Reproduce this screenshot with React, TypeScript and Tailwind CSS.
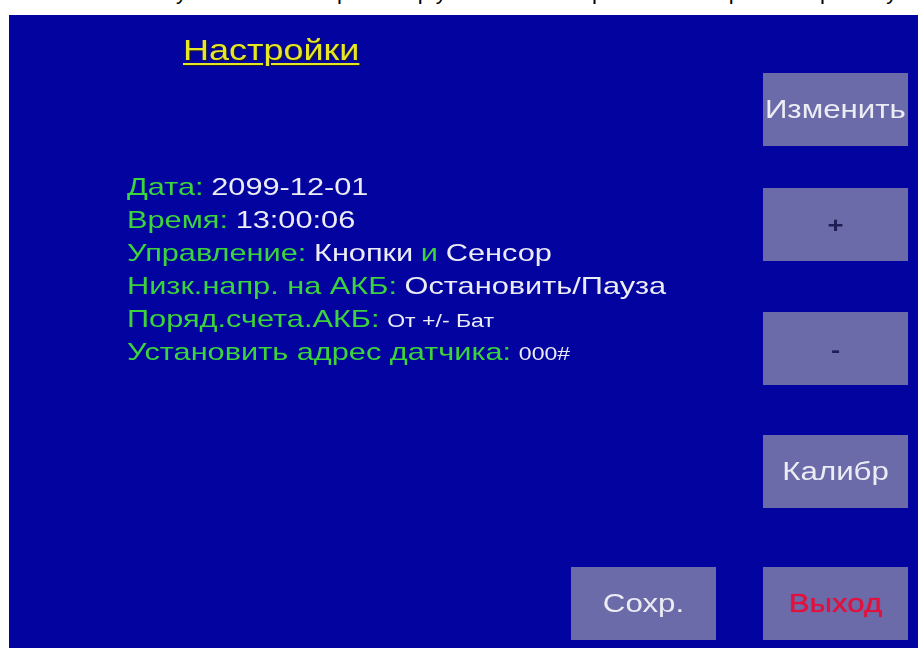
import React from "react"

const font = { fontFamily: '"Liberation Sans", Arial, sans-serif' }

type Row = { label: string; parts: { text: string; green?: boolean; small?: boolean }[] }

const rows: Row[] = [
  { label: "Дата:", parts: [{ text: "2099-12-01" }] },
  { label: "Время:", parts: [{ text: "13:00:06" }] },
  {
    label: "Управление:",
    parts: [{ text: "Кнопки" }, { text: "и", green: true }, { text: "Сенсор" }],
  },
  { label: "Низк.напр. на АКБ:", parts: [{ text: "Остановить/Пауза" }] },
  { label: "Поряд.счета.АКБ:", parts: [{ text: "От +/- Бат", small: true }] },
  { label: "Установить адрес датчика:", parts: [{ text: "000#", small: true }] },
]

const PanelButton = ({ children, className = "" }: { children: React.ReactNode; className?: string }) => (
  <div className={`flex h-[73px] w-[145px] items-center justify-center bg-[#6b6baa] ${className}`}>
    <span className="inline-block origin-center scale-x-[1.25] text-[25px] leading-none">{children}</span>
  </div>
)

export default function App() {
  return (
    <div className="flex h-[648px] w-[918px] flex-col bg-white" style={font}>
      {/* tail of the caption line above the panel */}
      <div className="h-[15px] overflow-hidden">
        <div className="ml-[120px] -mt-[19px] whitespace-nowrap text-[22px] leading-[22px] tracking-[6px] text-black">
          Рисунок 4. Экран группы настройки параметров устройства, пример
        </div>
      </div>

      <div className="ml-[9px] flex flex-1 bg-[#0303a0]">
        <div className="flex flex-1 flex-col">
          <div className="ml-[174px] mt-[21px] h-[28px]">
            <span className="inline-block origin-left scale-x-[1.24] text-[29px] leading-[28px] text-[#e6e627] underline decoration-2 underline-offset-[3px] [text-shadow:1px_1px_1px_#202020]">
              Настройки
            </span>
          </div>

          <div className="ml-[118px] mt-[106px] flex flex-col">
            {rows.map((row) => (
              <div key={row.label} className="h-[33px] origin-left scale-x-[1.28] whitespace-nowrap text-[24px] leading-[33px]">
                <span className="text-[#3cd43c]">{row.label}</span>
                {row.parts.map((p, i) => (
                  <span
                    key={i}
                    className={`ml-[6px] ${p.green ? "text-[#3cd43c]" : "text-[#ececf4]"} ${p.small ? "text-[18px]" : ""}`}
                  >
                    {p.text}
                  </span>
                ))}
              </div>
            ))}
          </div>

          <div className="mb-[8px] mr-[47px] mt-auto flex justify-end">
            <PanelButton className="text-[#ececf4]">Сохр.</PanelButton>
          </div>
        </div>

        <div className="mr-[10px] flex w-[145px] flex-col">
          <PanelButton className="mt-[58px] text-[#ececf4]">Изменить</PanelButton>
          <PanelButton className="mt-[42px] text-[#1e1e55]">
            <span className="text-[22px] font-bold">+</span>
          </PanelButton>
          <PanelButton className="mt-[51px] text-[#1e1e55]">
            <span className="text-[22px] font-bold">-</span>
          </PanelButton>
          <PanelButton className="mt-[50px] text-[#ececf4]">Калибр</PanelButton>
          <PanelButton className="mt-[59px] text-[#e3103c]">
            <span className="blur-[0.4px] [text-shadow:0_0_1px_#e3103c]">Выход</span>
          </PanelButton>
        </div>
      </div>
    </div>
  )
}
